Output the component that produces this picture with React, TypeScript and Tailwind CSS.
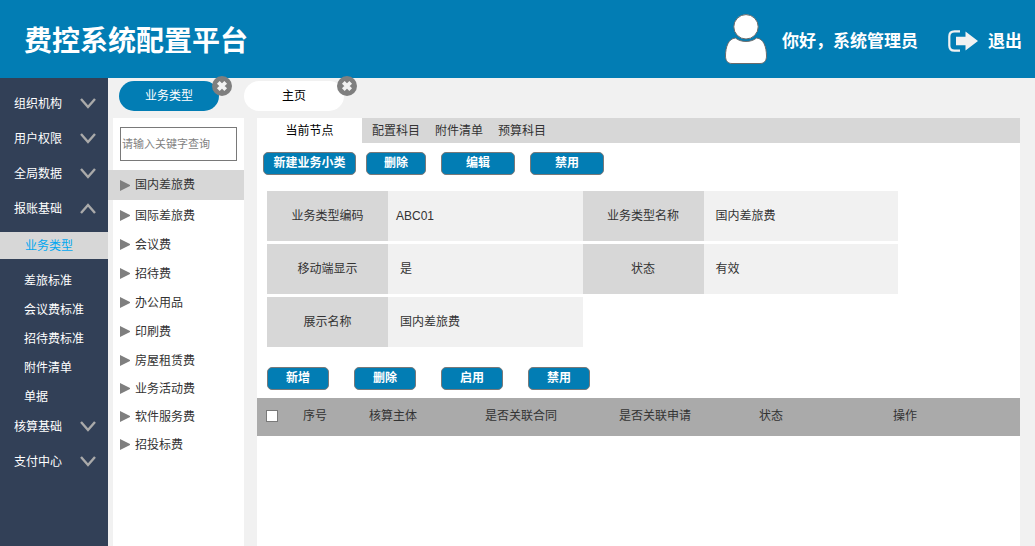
import React, { useState } from "react";

const modulesTop = [
  { name: "组织机构", open: false },
  { name: "用户权限", open: false },
  { name: "全局数据", open: false },
  { name: "报账基础", open: true },
];
const modulesBottom = [
  { name: "核算基础", open: false },
  { name: "支付中心", open: false },
];
const subPages = ["差旅标准", "会议费标准", "招待费标准", "附件清单", "单据"];

const tree = [
  { name: "国际差旅费", compact: false },
  { name: "会议费", compact: false },
  { name: "招待费", compact: false },
  { name: "办公用品", compact: false },
  { name: "印刷费", compact: false },
  { name: "房屋租赁费", compact: false },
  { name: "业务活动费", compact: true },
  { name: "软件服务费", compact: false },
  { name: "招投标费", compact: true },
];

const fields = [
  { label: "业务类型编码", value: "ABC01", code: true },
  { label: "业务类型名称", value: "国内差旅费", code: false },
  { label: "移动端显示", value: "是", code: false },
  { label: "状态", value: "有效", code: false },
  { label: "展示名称", value: "国内差旅费", code: false },
];

function UserIcon() {
  return (
    <svg className="h-[50px] w-[42px]" viewBox="0 0 42 50" fill="#fff" stroke="#6b6b6b" strokeWidth="1" aria-hidden="true">
      <circle cx="21" cy="12.8" r="12.2" />
      <path d="M10.500 24C15.500 28.600 26.500 28.600 31.500 24C38.500 24.400 41.500 33 41.500 42C41.500 47 39 49.500 35 49.500H7C3 49.500 .5 47 .5 42C.5 33 3.500 24.400 10.500 24Z" />
    </svg>
  );
}

function ExitIcon() {
  return (
    <svg className="h-[22px] w-[30px]" viewBox="0 0 30 22" aria-hidden="true">
      <path d="M12 1.300H6.500Q1.300 1.300 1.300 6.500V15.500Q1.300 20.700 6.500 20.700H12" fill="none" stroke="#f2f2f2" strokeWidth="2.200" />
      <path d="M8 6.800H17.500V1.500L30 11L17.500 20.500V15.200H8Z" fill="#f2f2f2" />
    </svg>
  );
}

function Chevron({ up }: { up: boolean }) {
  return (
    <svg className="h-[11px] w-4" viewBox="0 0 16 11" fill="none" stroke="#aaa" strokeWidth="2.400" aria-hidden="true">
      <path d={up ? "M1 10L8 2L15 10" : "M1 1L8 9L15 1"} />
    </svg>
  );
}

function ModuleButton({ name, open }: { name: string; open: boolean }) {
  return (
    <button type="button" aria-expanded={open} className="flex h-[35px] w-full items-center justify-between pr-3 pl-3.5 text-white">
      {name}
      <Chevron up={open} />
    </button>
  );
}

function Triangle() {
  return (
    <svg className="h-[11px] w-2.5" viewBox="0 0 10 11" aria-hidden="true">
      <path d="M0 0L10 5V6L0 11Z" fill="#7f7f7f" />
    </svg>
  );
}

function PageTab({ name, active }: { name: string; active: boolean }) {
  return (
    <div className="relative">
      <button
        type="button"
        className={active ? "h-[30px] w-[100px] rounded-full bg-[#027db4] text-white" : "h-[30px] w-[100px] rounded-full bg-white text-black"}
      >
        {name}
      </button>
      <button type="button" aria-label={"关闭" + name} className="absolute -top-[5px] -right-[13px] size-5">
        <svg viewBox="0 0 20 20" aria-hidden="true">
          <circle cx="10" cy="10" r="10" fill="#7f7f7f" />
          <path d="M6.300 6.300L13.700 13.700M13.700 6.300L6.300 13.700" stroke="#f2f2f2" strokeWidth="3.800" />
        </svg>
      </button>
    </div>
  );
}

function ActionButton({ name, width }: { name: string; width: string }) {
  return (
    <button
      type="button"
      className={"flex h-[23px] items-center justify-center rounded-[5px] border border-[#797979] bg-[#027db4] pb-0.5 font-bold text-white " + width}
    >
      {name}
    </button>
  );
}

export default function App() {
  const [keyword, setKeyword] = useState("");
  return (
    <div className="flex min-h-screen flex-col bg-[#f1f1f1] font-['Liberation_Sans','Noto_Sans_CJK_SC',sans-serif] text-[12px] leading-4 text-[#333]">
      <header className="flex h-[78px] items-center justify-between bg-[#027db4] pr-[13px] pl-6 font-bold text-white">
        <h1 className="pt-1.5 text-[28px] leading-9">费控系统配置平台</h1>
        <div className="flex items-center text-[17px] leading-6">
          <UserIcon />
          <span className="ml-[15px] pt-1.5">你好，系统管理员</span>
          <a href="#logout" className="ml-[30px] flex items-center gap-2.5 pt-1">
            <ExitIcon />
            <span className="pt-0.5">退出</span>
          </a>
        </div>
      </header>

      <div className="flex flex-1">
        <nav className="w-[108px] shrink-0 bg-[#324057] pt-2 text-white">
          {modulesTop.map((m) => (
            <ModuleButton key={m.name} name={m.name} open={m.open} />
          ))}
          <a href="#type" className="mt-1.5 flex h-[27px] items-center bg-[#d7d7d7] pl-[25px] text-[#02a7f0]">
            业务类型
          </a>
          <ul className="mt-3 mb-0.5 flex flex-col gap-[9px] pl-6">
            {subPages.map((s) => (
              <li key={s} className="flex h-5 items-center">
                <a href="#sub">{s}</a>
              </li>
            ))}
          </ul>
          {modulesBottom.map((m) => (
            <ModuleButton key={m.name} name={m.name} open={m.open} />
          ))}
        </nav>

        <div className="flex min-w-0 flex-1 flex-col">
          <div className="flex gap-[25px] pt-[3px] pb-[7px] pl-[11px]">
            <PageTab name="业务类型" active />
            <PageTab name="主页" active={false} />
          </div>

          <div className="flex flex-1 gap-[13px] pr-[15px] pl-[5px]">
            <aside className="w-[131px] shrink-0 bg-white pt-[9px]">
              <div className="px-[7px]">
                <input
                  type="text"
                  aria-label="关键字"
                  placeholder="请输入关键字查询"
                  value={keyword}
                  onChange={(e) => setKeyword(e.target.value)}
                  className="block h-[34px] w-full border border-[#797979] px-px text-[11px] placeholder:text-[#7f7f7f]"
                />
              </div>
              <ul className="mt-[9px]">
                <li className="mb-px -ml-[5px] flex h-[30px] items-center gap-[5px] bg-[#d7d7d7] pl-3">
                  <Triangle />
                  国内差旅费
                </li>
                {tree.map((t) => (
                  <li key={t.name} className={t.compact ? "flex h-[27px] items-center gap-[5px] pl-[7px]" : "flex h-[29px] items-center gap-[5px] pl-[7px]"}>
                    <Triangle />
                    {t.name}
                  </li>
                ))}
              </ul>
            </aside>

            <main className="min-w-0 flex-1 bg-white">
              <div className="flex h-[25px] items-stretch gap-[15px] bg-[#d7d7d7]">
                <button type="button" className="-mr-[5px] w-[105px] bg-white text-black">当前节点</button>
                <button type="button">配置科目</button>
                <button type="button">附件清单</button>
                <button type="button">预算科目</button>
              </div>

              <div className="flex gap-[15px] pt-[9px] pl-1.5">
                <div className="flex gap-2.5">
                  <ActionButton name="新建业务小类" width="w-[93px]" />
                  <ActionButton name="删除" width="w-[60px]" />
                </div>
                <ActionButton name="编辑" width="w-[74px]" />
                <ActionButton name="禁用" width="w-[74px]" />
              </div>

              <dl className="mt-4 ml-2.5 grid max-w-[631px] grid-cols-2 gap-y-[3px]">
                {fields.map((f) => (
                  <div key={f.label} className="flex h-[50px]">
                    <dt className="flex w-[121px] items-center justify-center bg-[#d7d7d7]">{f.label}</dt>
                    <dd className={f.code ? "flex flex-1 items-center bg-[#f1f1f1] pl-2" : "flex flex-1 items-center bg-[#f1f1f1] pl-3"}>{f.value}</dd>
                  </div>
                ))}
              </dl>

              <div className="mt-5 flex gap-[25px] pl-2.5">
                <ActionButton name="新增" width="w-[62px]" />
                <ActionButton name="删除" width="w-[62px]" />
                <ActionButton name="启用" width="w-[62px]" />
                <ActionButton name="禁用" width="w-[62px]" />
              </div>

              <table className="mt-2 w-full table-fixed text-left">
                <thead>
                  <tr className="h-[38px] bg-[#aaa]">
                    <th className="w-[46px] pb-0.5 pl-[9px]">
                      <input
                        type="checkbox"
                        aria-label="全选"
                        className="block size-3 appearance-none border border-[#797979] bg-white checked:bg-[#027db4]"
                      />
                    </th>
                    <th className="w-[66px] pb-0.5 font-normal">序号</th>
                    <th className="w-[116px] pb-0.5 font-normal">核算主体</th>
                    <th className="w-[134px] pb-0.5 font-normal">是否关联合同</th>
                    <th className="w-[140px] pb-0.5 font-normal">是否关联申请</th>
                    <th className="w-[134px] pb-0.5 font-normal">状态</th>
                    <th className="pb-0.5 font-normal">操作</th>
                  </tr>
                </thead>
              </table>
            </main>
          </div>
        </div>
      </div>
    </div>
  );
}
